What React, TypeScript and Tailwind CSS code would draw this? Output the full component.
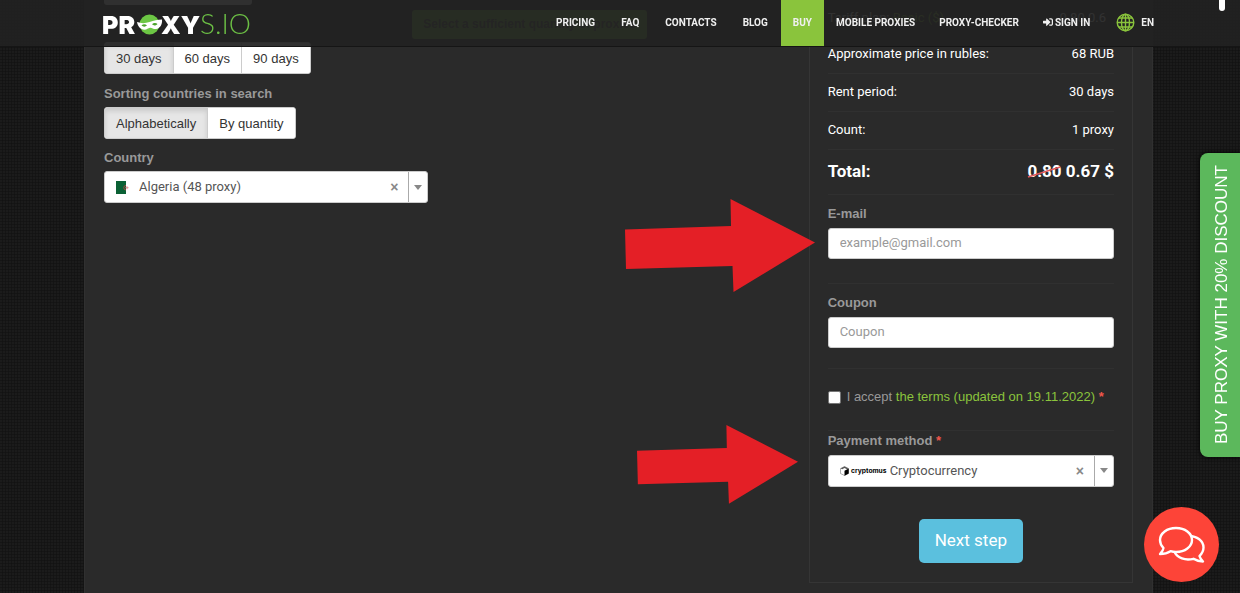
import React from "react";
import { FaSignInAlt } from "react-icons/fa";

const NAV_BEFORE = ["Pricing", "FAQ", "Contacts", "Blog"];
const NAV_AFTER = ["Mobile proxies", "Proxy-checker"];

const navItem = "flex h-full items-center pb-0.5 hover:text-[#8ac43c]";

function Logo() {
  return (
    <svg width="160" height="36" viewBox="0 0 160 36" role="img" aria-label="PROXYS.IO">
      <text x="3" y="27" fill="#fff" fontFamily="Inter, sans-serif" fontWeight="900" fontSize="25">PR</text>
      <text x="62" y="27" fill="#fff" fontFamily="Inter, sans-serif" fontWeight="900" fontSize="25">XY</text>
      <text x="101" y="27" fill="#6cbf45" fontFamily="Lato, sans-serif" fontWeight="300" fontSize="28">S.IO</text>
      <circle cx="50.500" cy="17.500" r="10" fill="#6cc644" />
      <path
        d="M38 15c4.500 1.500 8 1.500 12.500 0s8-2.500 12.500-2.500c.6 5-2 9-6 9.500-2.500.3-4-1.500-6-1.300s-3 2-5.500 2c-4 0-6.800-3.500-7.500-7.700z"
        fill="#fff"
      />
      <path d="M42.500 18.500c1.500-1.600 4-1.600 5.500 0-1.500 1.500-4 1.500-5.500 0zM53 17.300c1.500-1.600 4-1.800 5.500-.4-1.400 1.800-4 2-5.500.4z" fill="#4da52e" />
    </svg>
  );
}

function Globe() {
  return (
    <svg width="19" height="19" viewBox="0 0 19 19" fill="none" stroke="#8ac43c" strokeWidth="1.400" aria-hidden="true">
      <circle cx="9.500" cy="9.500" r="8.300" />
      <ellipse cx="9.500" cy="9.500" rx="4" ry="8.300" />
      <path d="M9.500 1v17M1 9.500h17M2.500 5h14M2.500 14h14" />
    </svg>
  );
}

function Flag() {
  return (
    <svg width="13" height="13" viewBox="0 0 13 13" aria-hidden="true">
      <path d="M0 0h10v13H0z" fill="#0b6135" />
      <path d="M10 0h3v13h-3z" fill="#fff" />
      <path d="M10 4.500a2 2 0 0 0 0 4.500" fill="none" stroke="#a5443f" strokeWidth="1" />
      <path d="M9.500 6.700h3M11 5.200v3" stroke="#e08a90" strokeWidth="1" />
    </svg>
  );
}

function Cryptomus() {
  return (
    <svg width="48" height="10" viewBox="0 0 48 10" role="img" aria-label="cryptomus">
      <path d="M4.500 .5 8.500 2.500v5L4.500 9.500.5 7.500v-5z" fill="#fff" stroke="#777" strokeWidth=".6" />
      <path d="M4.500 4.700 8.700 2.500v5L4.500 9.700z" fill="#000" />
      <path d="M.7 2.400 4.500.5l4 2-1.500.7-2.500-1.200-2.300 1.200z" fill="#555" />
      <text x="11" y="7" fontFamily="Inter, sans-serif" fontWeight="700" fontSize="6.700" fill="#000">cryptomus</text>
    </svg>
  );
}

function Arrow({ className }: { className: string }) {
  return (
    <svg className={className} viewBox="0 0 190 93" aria-hidden="true">
      <path d="M0 30.500 106 27 105.500 0 190 43.500 108.500 93 107.500 67 1 70z" fill="#e41f26" />
    </svg>
  );
}

function Toggle({ options }: { options: string[] }) {
  const [active, setActive] = React.useState(options[0]);
  return (
    <div className="flex h-8 w-fit overflow-hidden rounded-[3px] border border-[#ccc] bg-white text-[#333]">
      {options.map((o, i) => (
        <button
          key={o}
          type="button"
          aria-pressed={o === active}
          onClick={() => setActive(o)}
          className={
            (o === active ? "bg-[#e6e6e6] shadow-[inset_0_3px_5px_rgba(0,0,0,0.125)] " : "bg-white ") +
            (i > 0 ? "border-l border-[#ccc] " : "") +
            "px-[11px] pt-0.5 text-[13px]"
          }
        >
          {o}
        </button>
      ))}
    </div>
  );
}

function Combo({ id, icon, value }: { id: string; icon: React.ReactNode; value: string }) {
  return (
    <div className="flex h-8 items-center rounded-[3px] border border-[#ccc] bg-white pl-[11px]">
      {icon}
      <select
        id={id}
        className="h-full min-w-0 flex-1 appearance-none bg-transparent font-[Roboto,sans-serif] text-[13px] text-[#555] outline-none"
      >
        <option>{value}</option>
      </select>
      <button type="button" aria-label="Clear" className="px-2.5 text-sm font-bold text-[#888]">
        ×
      </button>
      <span className="flex h-full w-[19px] items-center justify-center border-l border-[#aaa]">
        <span className="border-x-4 border-t-[5px] border-x-transparent border-t-[#888]" />
      </span>
    </div>
  );
}

function Row({ name, children }: { name: string; children: React.ReactNode }) {
  return (
    <tr className="h-[38px] border-b border-[#303030]">
      <th scope="row" className="text-left font-normal">{name}</th>
      <td className="text-right">{children}</td>
    </tr>
  );
}

const label = "block text-[13px] leading-5 font-bold text-[#999]";
const field =
  "block h-[31px] w-full rounded-[3px] border border-[#ccc] bg-white px-[11px] pb-0.5 font-[Roboto,sans-serif] text-[13px] text-[#555] placeholder:text-[#999]";

export default function App() {
  return (
    <div className="relative min-h-screen overflow-hidden bg-[#1b1b1b] bg-[repeating-linear-gradient(0deg,#0000_0_2px,#1119_2px_3px),repeating-linear-gradient(90deg,#0000_0_2px,#1119_2px_3px)] pr-[87px] pl-[84px] font-['Liberation_Sans',Arial,sans-serif] text-[13px]">
      <header className="fixed inset-x-0 top-0 z-10 flex h-[47px] items-center justify-between border-b border-[#151515] bg-[#212121]/93 pr-[86px] pl-[99px]">
        <a href="#home" className="pt-1">
          <Logo />
        </a>
        <nav className="flex h-full items-center font-[Roboto,sans-serif] text-[10px] font-bold text-[#f0f0f0] uppercase">
          {NAV_BEFORE.map((n) => (
            <a key={n} href={"#" + n} className={navItem + " px-[13px]"}>{n}</a>
          ))}
          <a href="#buy" className="flex h-full items-center bg-[#8ac43c] px-3 pb-0.5">Buy</a>
          {NAV_AFTER.map((n) => (
            <a key={n} href={"#" + n} className={navItem + " px-3"}>{n}</a>
          ))}
          <a href="#signin" className={navItem + " px-3"}>
            <FaSignInAlt className="mr-0.5 size-2.5" />
            Sign in
          </a>
          <a href="#language" className="flex h-full items-center gap-1.5 pb-0.5 pl-3.5">
            <Globe />
            EN
          </a>
        </nav>
      </header>

      <main className="relative grid min-h-screen grid-cols-3 gap-7 border-x border-[#303030] bg-[#2a2a2a] px-[19px]">
        <section>
          <div className="h-[5px] w-[148px] rounded-b-[3px] bg-[#eee]" />
          <div className="pt-[37px]">
            <Toggle options={["30 days", "60 days", "90 days"]} />
          </div>
          <p className={label + " mt-2.5 mb-[3px]"}>Sorting countries in search</p>
          <Toggle options={["Alphabetically", "By quantity"]} />
          <label htmlFor="country" className={label + " mt-[9px] mb-[3px]"}>Country</label>
          <Combo
            id="country"
            value="Algeria (48 proxy)"
            icon={<span className="mr-2.5 shrink-0"><Flag /></span>}
          />
        </section>

        <div>
          <p className="mt-[10px] -ml-11 h-[29px] w-fit rounded-[3px] bg-[#78b83c] px-[11px] text-xs leading-7 font-bold whitespace-nowrap text-[#444]">
            Select a sufficient quantity of proxies
          </p>
        </div>

        <section className="mb-[10px] border-x border-b border-[#353535] px-[18px]">
          <table className="w-full font-[Roboto,sans-serif] text-[13px] text-white">
            <tbody>
              <tr className="h-[35px] border-b border-[#303030]">
                <th scope="row" className="text-left font-normal">Tariff plan: <span className="text-[#8ac43c]">Basic ($)</span></th>
                <td className="pr-2 text-right">0.80 0.6</td>
              </tr>
              <Row name="Approximate price in rubles:">68 RUB</Row>
              <Row name="Rent period:">30 days</Row>
              <Row name="Count:">1 proxy</Row>
              <tr className="h-[45px] border-b border-[#303030] text-[17px] font-bold">
                <th scope="row" className="text-left">Total:</th>
                <td className="text-right">
                  <span className="relative">
                    0.80
                    <svg className="absolute top-0.5 left-0 h-4 w-full" viewBox="0 0 34 16" preserveAspectRatio="none" aria-hidden="true">
                      <path d="M1 14 33 4" stroke="#e0565a" strokeWidth="1.500" />
                    </svg>
                  </span>{" "}
                  0.67 $
                </td>
              </tr>
            </tbody>
          </table>

          <div className="border-b border-[#303030] pt-[9px] pb-6">
            <label htmlFor="email" className={label + " mb-1"}>E-mail</label>
            <input id="email" type="email" placeholder="example@gmail.com" className={field} />
          </div>
          <div className="border-b border-[#303030] pt-[9px] pb-5">
            <label htmlFor="coupon" className={label + " mb-1"}>Coupon</label>
            <input id="coupon" type="text" placeholder="Coupon" className={field} />
          </div>
          <div className="flex h-[62px] items-center border-b border-[#303030] pb-1 whitespace-nowrap text-[#999]">
            <input id="terms" type="checkbox" className="mr-1.5 size-[13px] shrink-0 appearance-none rounded-[2px] border border-[#777] bg-white checked:bg-[#8ac43c]" />
            <label htmlFor="terms">
              I accept <a href="#terms" className="text-[#8ac43c]">the terms (updated on 19.11.2022)</a>{" "}
              <span className="font-bold text-[#f0564a]">*</span>
            </label>
          </div>
          <label htmlFor="payment" className={label + " mb-1"}>
            Payment method <span className="text-[#f0564a]">*</span>
          </label>
          <Combo id="payment" value="Cryptocurrency" icon={<span className="mr-0.5 shrink-0"><Cryptomus /></span>} />
          <button
            type="submit"
            className="mx-auto mt-8 mb-[18px] block h-11 rounded-[5px] bg-[#5bc0de] px-4 font-[Roboto,sans-serif] text-[17px] text-white"
          >
            Next step
          </button>
        </section>

        <Arrow className="absolute top-[199px] left-[540px] w-[190px]" />
        <Arrow className="absolute top-[425px] left-[552px] w-[161px]" />
      </main>

      <a
        href="#discount"
        className="fixed top-[153px] right-0 z-20 flex h-[304px] w-10 rotate-180 items-center justify-center rounded-r-lg bg-[#5cb85c] pr-1 text-[17px] whitespace-nowrap text-white shadow-[0_0_5px_#000] [writing-mode:vertical-rl]"
      >
        BUY PROXY WITH 20% DISCOUNT
      </a>
      <button
        type="button"
        aria-label="Chat"
        className="fixed right-[21px] bottom-[11px] z-20 flex size-[75px] items-center justify-center rounded-full bg-[#fd4438] text-white"
      >
        <svg width="48" height="38" viewBox="0 0 48 38" fill="#fd4438" stroke="#fff" strokeWidth="2.400" strokeLinejoin="round" aria-hidden="true">
          <path d="M31 10c8 0 14.500 5 14.500 11.500 0 3.500-1.500 6-4 8.500.5 2 1.500 3.500 3.500 5.500-4 0-7-1-9.500-2.700C27 35 19.500 32 16.500 26z" />
          <path d="M18 2C27 2 34 7.300 34 14S27 26 18 26c-2 0-3.800-.3-5.500-.8C9.500 27.200 6 28 2 28c2-2 3.300-4 3.500-6C3.300 19.800 2 17 2 14 2 7.300 9 2 18 2z" />
        </svg>
      </button>
      <div className="fixed top-0 right-[15px] z-20 h-[11px] w-1.5 rounded-b-full bg-white" />
    </div>
  );
}
